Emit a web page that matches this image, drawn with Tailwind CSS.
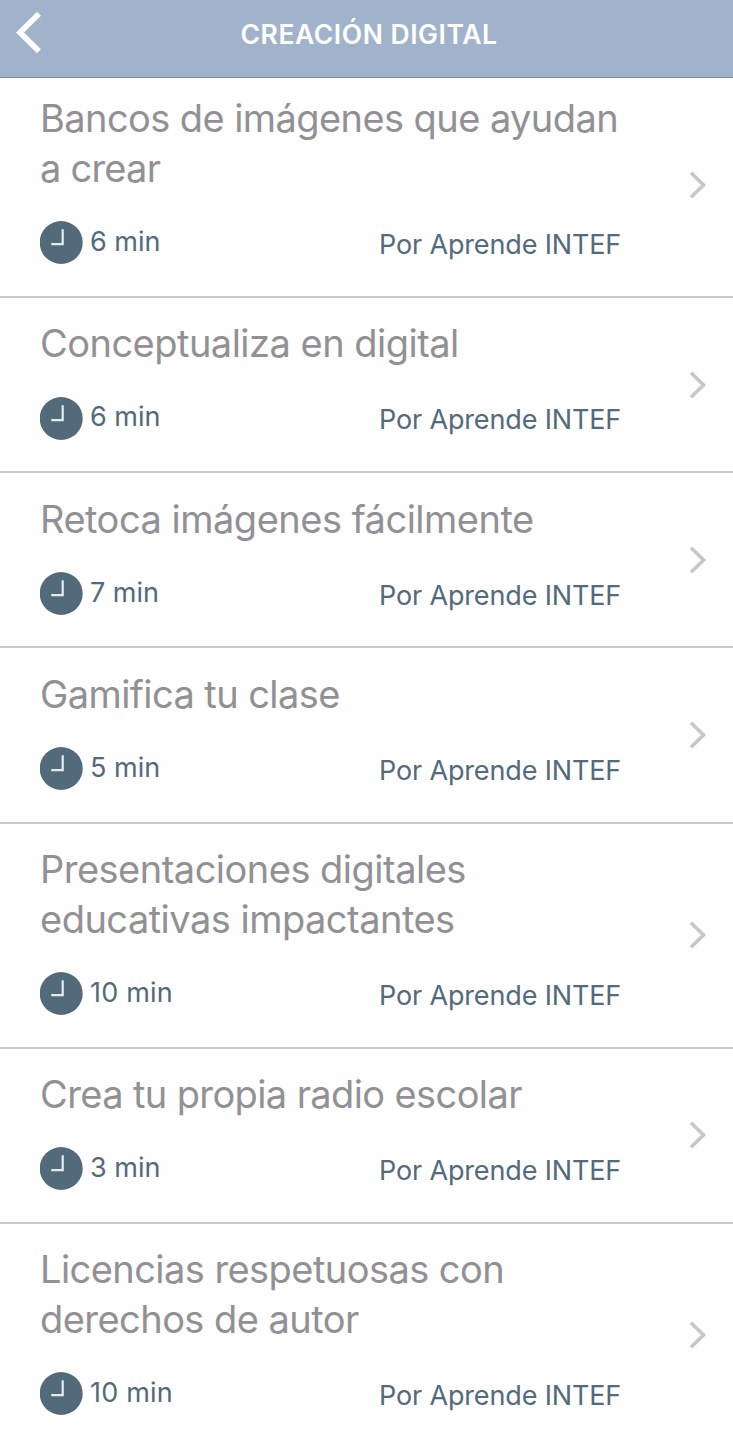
<!DOCTYPE html>
<html lang="es">
<head>
  <meta charset="UTF-8" />
  <meta name="viewport" content="width=device-width, initial-scale=1" />
  <title>Creación digital</title>
  <script src="https://cdn.jsdelivr.net/npm/@tailwindcss/browser@4"></script>
</head>
<body class="bg-[#fefefe] h-[1441px] overflow-hidden font-['Inter',sans-serif] text-[#536a7a]">

  <!-- shared icons -->
  <svg class="hidden">
    <symbol id="clock" viewBox="0 0 43 43">
      <circle cx="21.2" cy="21.5" r="21.5" fill="#536a7a" />
      <path d="M22.7 8.3V23.2H11.3" fill="none" stroke="#e3ebf0" stroke-width="2.2" />
    </symbol>
    <symbol id="chevron" viewBox="0 0 18 28">
      <path d="M2 1.8L14.5 14L2 26.2" fill="none" stroke="#c7c7cb" stroke-width="3.6" />
    </symbol>
  </svg>

  <header class="h-[78px] bg-[#a1b3cb] border-b border-[#7f8ca0] grid grid-cols-[120px_1fr_120px] items-start text-white">
    <a href="#" class="pl-4 pt-[11px]">
      <svg class="w-[26px] h-[43px]" viewBox="0 0 26 43">
        <path d="M23 2.8L4 21.5L23 40.2" fill="none" stroke="currentColor" stroke-width="5.6" />
      </svg>
    </a>
    <h1 class="pt-[15px] pl-[5px] text-center text-[26.5px] leading-[39px] font-semibold tracking-[0.55px] whitespace-nowrap">CREACIÓN DIGITAL</h1>
  </header>

  <ul>
    <li class="flex items-center h-[220px] border-b-2 border-[#cacaca] pl-10 pr-[26.5px]">
      <div class="flex-1 -mt-4">
        <h2 class="text-[38px] leading-[49.5px] text-[#919193] whitespace-nowrap"><span class="tracking-[-0.58px]">Bancos de imágenes que ayudan</span><br /><span class="tracking-[-0.77px]">a crear</span></h2>
        <div class="flex items-center mt-[28px] text-[27px] leading-[33px]">
          <svg class="size-[43px] overflow-visible"><use href="#clock" class="overflow-visible" /></svg>
          <span class="w-[289px] ml-[7px] -mt-[3px]">6 min</span>
          <span class="mt-[3px] whitespace-nowrap tracking-[-0.15px]">Por Aprende INTEF</span>
        </div>
      </div>
      <svg class="w-[18px] h-7 -mt-[5px]"><use href="#chevron" /></svg>
    </li>
    <li class="flex items-center h-[175.2px] border-b-2 border-[#cacaca] pl-10 pr-[26.5px]">
      <div class="flex-1 -mt-[10px]">
        <h2 class="text-[38px] leading-[49.5px] text-[#919193] whitespace-nowrap tracking-[-0.52px]">Conceptualiza en digital</h2>
        <div class="flex items-center mt-[28px] text-[27px] leading-[33px]">
          <svg class="size-[43px] overflow-visible"><use href="#clock" class="overflow-visible" /></svg>
          <span class="w-[289px] ml-[7px] -mt-[3px]">6 min</span>
          <span class="mt-[3px] whitespace-nowrap tracking-[-0.15px]">Por Aprende INTEF</span>
        </div>
      </div>
      <svg class="w-[18px] h-7"><use href="#chevron" /></svg>
    </li>
    <li class="flex items-center h-[175.2px] border-b-2 border-[#cacaca] pl-10 pr-[26.5px]">
      <div class="flex-1 -mt-[10px]">
        <h2 class="text-[38px] leading-[49.5px] text-[#919193] whitespace-nowrap tracking-[-0.5px]">Retoca imágenes fácilmente</h2>
        <div class="flex items-center mt-[28px] text-[27px] leading-[33px]">
          <svg class="size-[43px] overflow-visible"><use href="#clock" class="overflow-visible" /></svg>
          <span class="w-[289px] ml-[7px] -mt-[3px]">7 min</span>
          <span class="mt-[3px] whitespace-nowrap tracking-[-0.15px]">Por Aprende INTEF</span>
        </div>
      </div>
      <svg class="w-[18px] h-7"><use href="#chevron" /></svg>
    </li>
    <li class="flex items-center h-[175.2px] border-b-2 border-[#cacaca] pl-10 pr-[26.5px]">
      <div class="flex-1 -mt-[10px]">
        <h2 class="text-[38px] leading-[49.5px] text-[#919193] whitespace-nowrap tracking-[-0.58px]">Gamifica tu clase</h2>
        <div class="flex items-center mt-[28px] text-[27px] leading-[33px]">
          <svg class="size-[43px] overflow-visible"><use href="#clock" class="overflow-visible" /></svg>
          <span class="w-[289px] ml-[7px] -mt-[3px]">5 min</span>
          <span class="mt-[3px] whitespace-nowrap tracking-[-0.15px]">Por Aprende INTEF</span>
        </div>
      </div>
      <svg class="w-[18px] h-7"><use href="#chevron" /></svg>
    </li>
    <li class="flex items-center h-[225px] border-b-2 border-[#cacaca] pl-10 pr-[26.5px]">
      <div class="flex-1 -mt-[10px]">
        <h2 class="text-[38px] leading-[49.5px] text-[#919193] whitespace-nowrap"><span class="tracking-[-0.51px]">Presentaciones digitales</span><br /><span class="tracking-[-0.52px]">educativas impactantes</span></h2>
        <div class="flex items-center mt-[28px] text-[27px] leading-[33px]">
          <svg class="size-[43px] overflow-visible"><use href="#clock" class="overflow-visible" /></svg>
          <span class="w-[289px] ml-[7px] -mt-[3px] tracking-[0.2px]">10 min</span>
          <span class="mt-[3px] whitespace-nowrap tracking-[-0.15px]">Por Aprende INTEF</span>
        </div>
      </div>
      <svg class="w-[18px] h-7"><use href="#chevron" /></svg>
    </li>
    <li class="flex items-center h-[175.2px] border-b-2 border-[#cacaca] pl-10 pr-[26.5px]">
      <div class="flex-1 -mt-[10px]">
        <h2 class="text-[38px] leading-[49.5px] text-[#919193] whitespace-nowrap tracking-[-0.61px]">Crea tu propia radio escolar</h2>
        <div class="flex items-center mt-[28px] text-[27px] leading-[33px]">
          <svg class="size-[43px] overflow-visible"><use href="#clock" class="overflow-visible" /></svg>
          <span class="w-[289px] ml-[7px] -mt-[3px]">3 min</span>
          <span class="mt-[3px] whitespace-nowrap tracking-[-0.15px]">Por Aprende INTEF</span>
        </div>
      </div>
      <svg class="w-[18px] h-7"><use href="#chevron" /></svg>
    </li>
    <li class="flex items-center h-[223px] pl-10 pr-[26.5px]">
      <div class="flex-1 -mt-[10px]">
        <h2 class="text-[38px] leading-[49.5px] text-[#919193] whitespace-nowrap"><span class="tracking-[-0.56px]">Licencias respetuosas con</span><br /><span class="tracking-[-0.55px]">derechos de autor</span></h2>
        <div class="flex items-center mt-[28px] text-[27px] leading-[33px]">
          <svg class="size-[43px] overflow-visible"><use href="#clock" class="overflow-visible" /></svg>
          <span class="w-[289px] ml-[7px] -mt-[3px] tracking-[0.2px]">10 min</span>
          <span class="mt-[3px] whitespace-nowrap tracking-[-0.15px]">Por Aprende INTEF</span>
        </div>
      </div>
      <svg class="w-[18px] h-7"><use href="#chevron" /></svg>
    </li>
  </ul>

</body>
</html>
